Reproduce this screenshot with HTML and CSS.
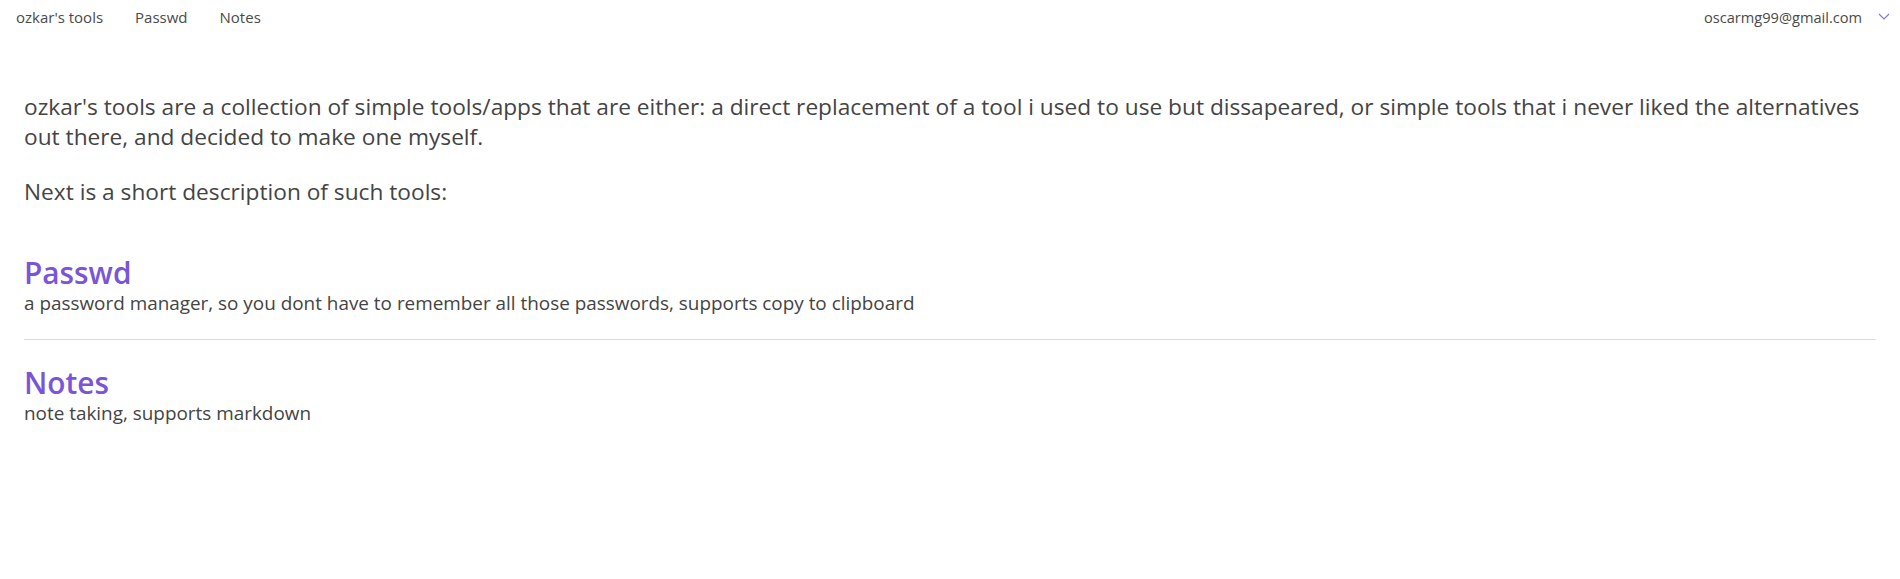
FILE: index.html
```html
<!DOCTYPE html>
<html lang="en">
<head>
<meta charset="utf-8">
<title>ozkar's tools</title>
<link rel="stylesheet" href="styles.css">
</head>
<body>
<header class="topbar">
  <nav class="nav-left">
    <a class="nav-link brand" href="#">ozkar's tools</a>
    <a class="nav-link" href="#">Passwd</a>
    <a class="nav-link" href="#">Notes</a>
  </nav>
  <div class="user">
    <span class="user-email">oscarmg99@gmail.com</span>
    <svg class="chevron" width="12" height="7" viewBox="0 0 12 7" aria-hidden="true">
      <polyline points="1,1 6,6 11,1" fill="none" stroke="#8a6fe0" stroke-width="1.1"/>
    </svg>
  </div>
</header>
<main class="content">
  <p class="intro">ozkar's tools are a collection of simple tools/apps that are either: a direct replacement of a tool i used to use but dissapeared, or simple tools that i never liked the alternatives out there, and decided to make one myself.</p>
  <p class="intro">Next is a short description of such tools:</p>
  <section class="tools">
    <article class="tool">
      <h3 class="tool-title">Passwd</h3>
      <p class="tool-desc">a password manager, so you dont have to remember all those passwords, supports copy to clipboard</p>
    </article>
    <hr class="divider">
    <article class="tool">
      <h3 class="tool-title">Notes</h3>
      <p class="tool-desc">note taking, supports markdown</p>
    </article>
  </section>
</main>
</body>
</html>
```

FILE: styles.css
```css
* { box-sizing: border-box; }

html, body {
  margin: 0;
  padding: 0;
  background: #ffffff;
}

body {
  font-family: "Open Sans", "Noto Sans", "Liberation Sans", sans-serif;
  color: #444444;
}

.topbar {
  display: flex;
  justify-content: space-between;
  align-items: center;
  padding: 7px 10px 7px 0;
  height: 34px;
}

.nav-left {
  display: flex;
  align-items: center;
}

.nav-link {
  display: block;
  font-size: 15px;
  line-height: 20px;
  color: #4a4a4a;
  text-decoration: none;
  padding: 0 16px;
}

.user {
  display: flex;
  align-items: center;
  gap: 16px;
}

.user-email {
  font-size: 14.6px;
  line-height: 20px;
  color: #4a4a4a;
}

.chevron {
  display: block;
  margin-top: -1px;
}

.content {
  padding: 58px 24px 0 24px;
}

.intro {
  font-size: 22.7px;
  line-height: 30px;
  margin: 0 0 25px 0;
}

.tools {
  margin-top: 49px;
}

.tool-title {
  font-size: 29.8px;
  line-height: 34px;
  font-weight: 600;
  color: #7a55d7;
  margin: 0;
}

.tool-desc {
  font-size: 18.9px;
  line-height: 27px;
  margin: 0;
}

.divider {
  border: 0;
  border-top: 1px solid #dcdcdc;
  margin: 22px 0 26px 0;
}
```
